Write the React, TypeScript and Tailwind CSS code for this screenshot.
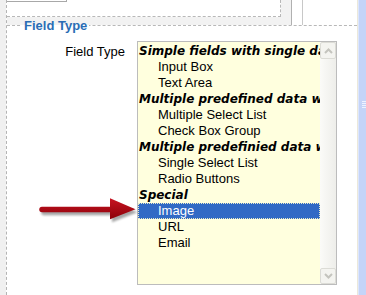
const rows: { label: string; group?: boolean; selected?: boolean }[] = [
  { label: "Simple fields with single data value", group: true },
  { label: "Input Box" },
  { label: "Text Area" },
  { label: "Multiple predefined data with multiple values", group: true },
  { label: "Multiple Select List" },
  { label: "Check Box Group" },
  { label: "Multiple predefinied data with single value", group: true },
  { label: "Single Select List" },
  { label: "Radio Buttons" },
  { label: "Special", group: true },
  { label: "Image", selected: true },
  { label: "URL" },
  { label: "Email" },
]

function Chevron({ up }: { up?: boolean }) {
  return (
    <svg width="9" height="6" viewBox="0 0 9 6">
      <polyline
        points={up ? "1,5 4.5,1.5 8,5" : "1,1 4.5,4.5 8,1"}
        fill="none"
        stroke="#c4c4be"
        strokeWidth="2"
      />
    </svg>
  )
}

function Arrow() {
  return (
    <svg
      className="absolute left-[38px] top-[196px]"
      width="104"
      height="32"
      viewBox="0 0 104 32"
    >
      <defs>
        <linearGradient id="red" gradientUnits="userSpaceOnUse" x1="0" y1="2" x2="0" y2="24">
          <stop offset="0" stopColor="#c81422" />
          <stop offset="1" stopColor="#8a0008" />
        </linearGradient>
        <filter id="blur" x="-10%" y="-30%" width="120%" height="160%">
          <feGaussianBlur stdDeviation="1.2" />
        </filter>
      </defs>
      <g fill="#000" opacity="0.35" filter="url(#blur)" transform="translate(2 3)">
        <rect x="1.25" y="10.75" width="73" height="5.5" rx="2.75" />
        <polygon points="72,2.3 97.5,13.3 72,23.3" />
      </g>
      <rect x="1.25" y="10.75" width="73" height="5.5" rx="2.75" fill="url(#red)" />
      <polygon points="72,2.3 97.5,13.3 72,23.3" fill="url(#red)" />
    </svg>
  )
}

export default function App() {
  return (
    <div className="relative flex h-[295px] w-[366px] overflow-hidden bg-white font-['Liberation_Sans',Arial,sans-serif] text-[13px] leading-[16px] text-black">
      <div className="w-[6px] shrink-0 bg-[#f0f0f0]" />

      <div className="flex w-[351px] shrink-0 flex-col border-l border-dashed border-[#b4b4b4]">
        {/* panels above the fieldset */}
        <div className="flex h-[25px] shrink-0">
          <div className="w-[285px] border-r border-[#b0b0b0] bg-[#f2f2f2]">
            <div className="h-[17px] w-[274px] border-r border-b border-dashed border-[#b8b8b8] bg-white">
              <div className="h-[2px] w-[60px] border-r border-b border-[#a8a8a8]" />
            </div>
          </div>
          <div className="w-[10px]" />
          <div className="w-px bg-[#c8c8c8]" />
        </div>

        <fieldset className="-mt-[7px] border-t border-dashed border-[#b8b8b8]">
          <legend className="ml-[15px] px-[2px] text-[13px] font-bold leading-[15px] text-[#2a6db5]">
            Field Type
          </legend>

          <div className="flex pt-[8px]">
            <div className="w-[130px] pr-[12px] pt-[3px] text-right">Field Type</div>

            <div className="flex h-[244px] w-[200px] border border-[#bcbcbc] bg-[#ffffde]">
              <div className="min-w-0 flex-1 overflow-hidden pt-[1px]">
                {rows.map((row, i) =>
                  row.selected ? (
                    <div
                      key={i}
                      className="h-[16px] overflow-hidden whitespace-nowrap border border-dotted border-[#e8ecc8] bg-[#316ac5] pl-[19px] leading-[14px] text-white"
                    >
                      {row.label}
                    </div>
                  ) : (
                    <div
                      key={i}
                      className={
                        row.group
                          ? "h-[16px] overflow-hidden whitespace-nowrap pl-[1px] font-['DejaVu_Sans',Verdana,sans-serif] text-[12px] font-bold italic"
                          : "h-[16px] overflow-hidden whitespace-nowrap pl-[20px]"
                      }
                    >
                      {row.label}
                    </div>
                  )
                )}
              </div>

              <div className="flex w-[16px] shrink-0 flex-col bg-gradient-to-r from-[#fbfbf8] to-[#eeeeea]">
                <div className="flex h-[17px] items-center justify-center rounded-[2px] border border-[#dcdcd6] bg-[#f4f4f0]">
                  <Chevron up />
                </div>
                <div className="flex-1" />
                <div className="flex h-[16px] items-center justify-center rounded-[2px] border border-[#dcdcd6] bg-[#f4f4f0]">
                  <Chevron />
                </div>
              </div>
            </div>
          </div>
        </fieldset>
      </div>

      <div className="w-px shrink-0 bg-[#ebe8da]" />
      <div className="flex w-[8px] shrink-0 flex-col border-l border-[#dce5fc] bg-[#c4d4f8] pl-[3px] pt-[101px]">
        <div className="flex flex-col gap-[1px]">
          <div className="h-px w-[4px] bg-[#eef3ff]" />
          <div className="h-px w-[4px] bg-[#eef3ff]" />
          <div className="h-px w-[4px] bg-[#eef3ff]" />
          <div className="h-px w-[4px] bg-[#eef3ff]" />
        </div>
      </div>

      <Arrow />
    </div>
  )
}
